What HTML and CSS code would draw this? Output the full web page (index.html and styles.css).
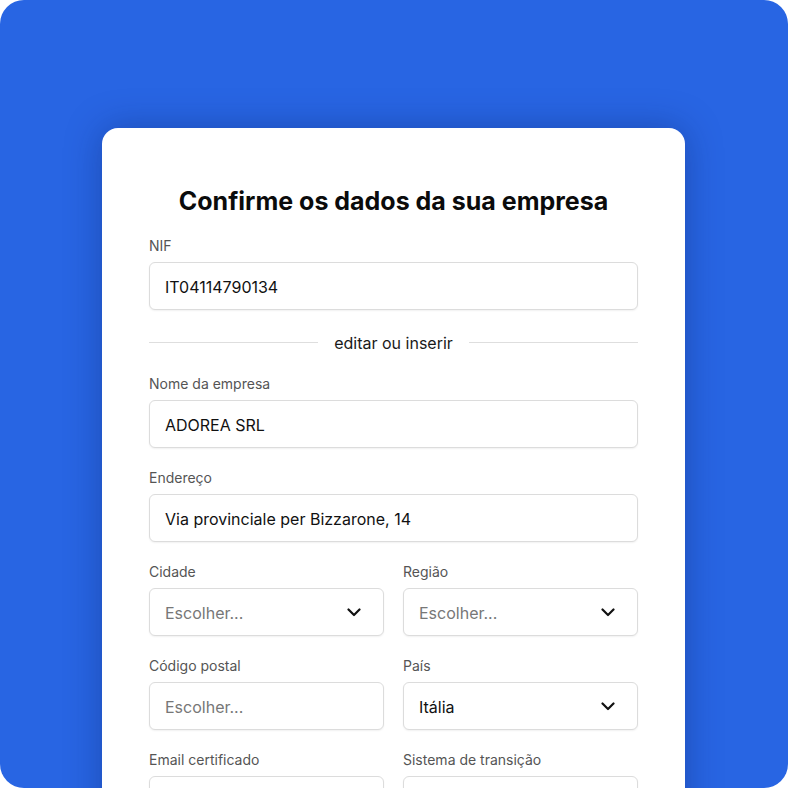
FILE: index.html
```html
<!DOCTYPE html>
<html lang="pt">
<head>
<meta charset="utf-8">
<title>Confirme os dados da sua empresa</title>
<link rel="stylesheet" href="styles.css">
</head>
<body>
<div class="stage">
  <div class="card">
    <h1 class="title">Confirme os dados da sua empresa</h1>

    <div class="field">
      <label class="label">NIF</label>
      <div class="input"><span class="value">IT04114790134</span></div>
    </div>

    <div class="divider"><span class="line"></span><span class="divider-text">editar ou inserir</span><span class="line"></span></div>

    <div class="fields">
      <div class="field">
        <label class="label">Nome da empresa</label>
        <div class="input"><span class="value">ADOREA SRL</span></div>
      </div>
      <div class="field">
        <label class="label">Endereço</label>
        <div class="input"><span class="value">Via provinciale per Bizzarone, 14</span></div>
      </div>
      <div class="row">
        <div class="field">
          <label class="label">Cidade</label>
          <div class="input select"><span class="placeholder">Escolher...</span>
            <svg class="chev" viewBox="0 0 14 9" width="14" height="9"><path d="M1.5 1.5 L7 7 L12.5 1.5" fill="none" stroke="#111" stroke-width="2.2" stroke-linecap="round" stroke-linejoin="round"/></svg>
          </div>
        </div>
        <div class="field">
          <label class="label">Região</label>
          <div class="input select"><span class="placeholder">Escolher...</span>
            <svg class="chev" viewBox="0 0 14 9" width="14" height="9"><path d="M1.5 1.5 L7 7 L12.5 1.5" fill="none" stroke="#111" stroke-width="2.2" stroke-linecap="round" stroke-linejoin="round"/></svg>
          </div>
        </div>
      </div>
      <div class="row">
        <div class="field">
          <label class="label">Código postal</label>
          <div class="input"><span class="placeholder">Escolher...</span></div>
        </div>
        <div class="field">
          <label class="label">País</label>
          <div class="input select"><span class="value">Itália</span>
            <svg class="chev" viewBox="0 0 14 9" width="14" height="9"><path d="M1.5 1.5 L7 7 L12.5 1.5" fill="none" stroke="#111" stroke-width="2.2" stroke-linecap="round" stroke-linejoin="round"/></svg>
          </div>
        </div>
      </div>
      <div class="row">
        <div class="field">
          <label class="label">Email certificado</label>
          <div class="input"></div>
        </div>
        <div class="field">
          <label class="label">Sistema de transição</label>
          <div class="input"></div>
        </div>
      </div>
    </div>
  </div>
</div>
</body>
</html>
```

FILE: styles.css
```css
* { box-sizing: border-box; }
html, body { margin: 0; padding: 0; background: #ffffff; }
body { font-family: Inter, "Liberation Sans", Arial, sans-serif; color: #111; }

.stage {
  width: 788px;
  height: 788px;
  background: #2865e3;
  border-radius: 24px;
  overflow: hidden;
  padding-top: 128px;
  padding-left: 102px;
}

.card {
  width: 583px;
  height: 720px;
  background: #fff;
  border-radius: 16px;
  box-shadow: 0 0 36px rgba(10, 30, 90, 0.35);
  padding: 57px 47px 0 47px;
}

.title {
  margin: 0 0 19px 0;
  font-size: 25px;
  line-height: 32px;
  font-weight: 700;
  text-align: center;
  color: #0b0b0b;
}

.field { display: flex; flex-direction: column; gap: 6px; min-width: 0; }

.label {
  font-size: 14px;
  line-height: 20px;
  color: #555;
}

.input {
  height: 48px;
  border: 1px solid #dcdcdc;
  border-radius: 6px;
  box-shadow: 0 1px 2px rgba(0,0,0,0.06);
  display: flex;
  align-items: center;
  padding: 2px 16px 0 15px;
  font-size: 16px;
  background: #fff;
}
.value { color: #111; }
.placeholder { color: #777; }

.select { justify-content: space-between; padding-right: 22px; }
.chev { display: block; margin-top: -2px; }

.divider {
  display: flex;
  align-items: center;
  gap: 16px;
  height: 20px;
  margin: 22px 0;
}
.line { flex: 1; height: 1px; background: #dedede; }
.divider-text { font-size: 16px; line-height: 20px; color: #1a1a1a; padding-top: 2px; }

.fields { display: flex; flex-direction: column; gap: 20px; }
.row { display: grid; grid-template-columns: 1fr 1fr; gap: 19px; }
```
